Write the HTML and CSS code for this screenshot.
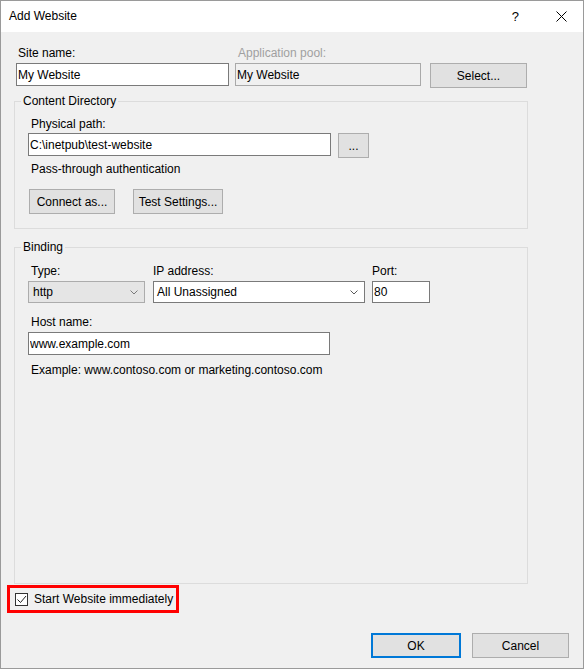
FILE: index.html
```html
<!DOCTYPE html>
<html lang="en">
    <head>
        <meta charset="UTF-8">
        <meta name="viewport" content="width=device-width, initial-scale=1.0">
        <title>Add Website</title>

        <link rel="stylesheet" href="styles.css">
    </head>
    <body>
        <div class="window">
            <header class="titlebar">
                <span class="title">Add Website</span>
                <span class="help">?</span>
                <svg class="close" width="11" height="11" viewBox="0 0 11 11">
                    <path d="M0.5 0.5 L10.5 10.5 M10.5 0.5 L0.5 10.5" stroke="#000" stroke-width="1" fill="none"/>
                </svg>
            </header>

            <form class="content" onsubmit="return false">
                <div class="site-row">
                    <div class="field field-site">
                        <label class="caption">Site name:</label>
                        <input class="textbox site-name" type="text" value="My Website">
                    </div>
                    <div class="field field-pool">
                        <label class="caption disabled">Application pool:</label>
                        <input class="textbox readonly pool" type="text" value="My Website" readonly>
                    </div>
                    <button class="btn btn-select" type="button">Select...</button>
                </div>

                <fieldset class="group group-content">
                    <legend>Content Directory</legend>
                    <label class="caption">Physical path:</label>
                    <div class="path-row">
                        <input class="textbox path" type="text" value="C:\inetpub\test-website">
                        <button class="btn btn-browse" type="button">...</button>
                    </div>
                    <p class="caption pass">Pass-through authentication</p>
                    <div class="auth-row">
                        <button class="btn btn-connect" type="button">Connect as...</button>
                        <button class="btn btn-test" type="button">Test Settings...</button>
                    </div>
                </fieldset>

                <fieldset class="group group-binding">
                    <legend>Binding</legend>
                    <div class="binding-row">
                        <div class="field field-type">
                            <label class="caption">Type:</label>
                            <div class="combo combo-list">
                                <span>http</span>
                                <svg class="chevron" width="8" height="5" viewBox="0 0 8 5">
                                    <path d="M0.5 0.5 L4 4 L7.5 0.5" stroke="#7a7a7a" fill="none"/>
                                </svg>
                            </div>
                        </div>
                        <div class="field field-ip">
                            <label class="caption">IP address:</label>
                            <div class="combo combo-edit">
                                <span>All Unassigned</span>
                                <svg class="chevron" width="8" height="5" viewBox="0 0 8 5">
                                    <path d="M0.5 0.5 L4 4 L7.5 0.5" stroke="#5a5a5a" fill="none"/>
                                </svg>
                            </div>
                        </div>
                        <div class="field field-port">
                            <label class="caption">Port:</label>
                            <input class="textbox port" type="text" value="80">
                        </div>
                    </div>
                    <label class="caption host-label">Host name:</label>
                    <input class="textbox host" type="text" value="www.example.com">
                    <p class="caption example">Example: www.contoso.com or marketing.contoso.com</p>
                </fieldset>

                <label class="start-box">
                    <span class="check">
                        <svg width="11" height="11" viewBox="0 0 11 11">
                            <path d="M1.5 5.5 L4.5 8.5 L10 2" stroke="#222" stroke-width="1" fill="none"/>
                        </svg>
                    </span>
                    Start Website immediately
                </label>

                <div class="actions">
                    <button class="btn btn-ok" type="submit">OK</button>
                    <button class="btn btn-cancel" type="button">Cancel</button>
                </div>
            </form>
        </div>
    </body>
</html>
```

FILE: styles.css
```css
* {
    padding: 0px;
    margin: 0px;
    box-sizing: border-box;
    font-family: "Liberation Sans", Arial, Helvetica, sans-serif;
    font-size: 12px;
}

body {
    background-color: #fff;
    color: #000;
}

.window {
    width: 584px;
    height: 669px;
    border: 1px solid #9a9a9a;
    display: flex;
    flex-direction: column;
}

/* title bar */
.titlebar {
    height: 31px;
    background-color: #fff;
    display: flex;
    align-items: center;
    padding-left: 8px;
    padding-right: 16px;
}

.titlebar .title {
    line-height: 15px;
}

.titlebar .help {
    margin-left: auto;
    margin-right: 37px;
    font-size: 13px;
}

/* dialog body */
.content {
    flex: 1;
    background-color: #f0f0f0;
    display: flex;
    flex-direction: column;
    padding-top: 13px;
    padding-bottom: 10px;
}

.caption {
    display: block;
    height: 16px;
    line-height: 15px;
    padding-top: 1px;
    padding-left: 3px;
}

.caption.disabled {
    color: #a0a0a0;
}

.field {
    display: flex;
    flex-direction: column;
}

.field .caption {
    margin-bottom: 2px;
}

.textbox {
    height: 23px;
    border: 1px solid #7a7a7a;
    background-color: #fff;
    padding-left: 1px;
    color: #000;
}

.textbox.readonly {
    background-color: #f0f0f0;
    border-color: #a9a9a9;
}

.btn {
    height: 25px;
    border: 1px solid #adadad;
    background-color: #e1e1e1;
    color: #000;
    text-align: center;
}

/* site name row */
.site-row {
    display: flex;
    align-items: flex-start;
    padding-left: 15px;
}

.field-site {
    width: 213px;
}

.field-site .caption {
    padding-left: 2px;
}

.field-pool {
    width: 186px;
    margin-left: 6px;
}

.btn-select {
    width: 97px;
    margin-left: 9px;
    margin-top: 18px;
}

/* group boxes */
.group {
    margin-left: 13px;
    width: 514px;
    border: 1px solid #dcdcdc;
    padding-left: 13px;
}

.group legend {
    line-height: 14px;
    padding: 0 2px;
    margin-left: -7px;
}

.group-content {
    margin-top: 6px;
    padding-top: 8px;
    padding-bottom: 14px;
}

.group-content > .caption {
    margin-bottom: 1px;
}

.path-row {
    display: flex;
    align-items: flex-start;
}

.path {
    width: 303px;
}

.btn-browse {
    width: 31px;
    margin-left: 7px;
}

.pass {
    margin-top: 3px;
}

.auth-row {
    display: flex;
    margin-top: 12px;
    padding-left: 1px;
}

.btn-connect {
    width: 86px;
}

.btn-test {
    width: 90px;
    margin-left: 18px;
}

.group-binding {
    margin-top: 11px;
    flex: 1;
    padding-top: 9px;
}

.binding-row {
    display: flex;
}

.combo {
    height: 22px;
    display: flex;
    align-items: center;
    justify-content: space-between;
    padding-left: 4px;
    padding-right: 6px;
}

.combo-list {
    background-color: #e5e5e5;
    border: 1px solid #acacac;
}

.combo-edit {
    background-color: #fff;
    border: 1px solid #7a7a7a;
    padding-left: 3px;
}

.field-type {
    width: 117px;
}

.field-ip {
    width: 212px;
    margin-left: 8px;
}

.field-ip .caption {
    padding-left: 0;
}

.field-port {
    width: 58px;
    margin-left: 7px;
}

.field-port .caption {
    padding-left: 0;
}

.port {
    height: 22px;
}

.host-label {
    margin-top: 11px;
    margin-bottom: 2px;
}

.host {
    width: 302px;
}

.example {
    margin-top: 7px;
}

/* start checkbox, highlighted */
.start-box {
    margin-top: 1px;
    margin-left: 6px;
    width: 172px;
    height: 28px;
    border: 3px solid #ff0000;
    display: flex;
    align-items: center;
    padding-left: 5px;
    line-height: 15px;
}

.check {
    width: 13px;
    height: 13px;
    border: 1px solid #333;
    background-color: #fff;
    margin-right: 6px;
    display: flex;
    align-items: center;
    justify-content: center;
}

/* OK / Cancel */
.actions {
    display: flex;
    justify-content: flex-end;
    margin-top: 20px;
    padding-right: 14px;
}

.btn-ok {
    width: 90px;
    border: 2px solid #0078d7;
}

.btn-cancel {
    width: 97px;
    margin-left: 11px;
}
```
